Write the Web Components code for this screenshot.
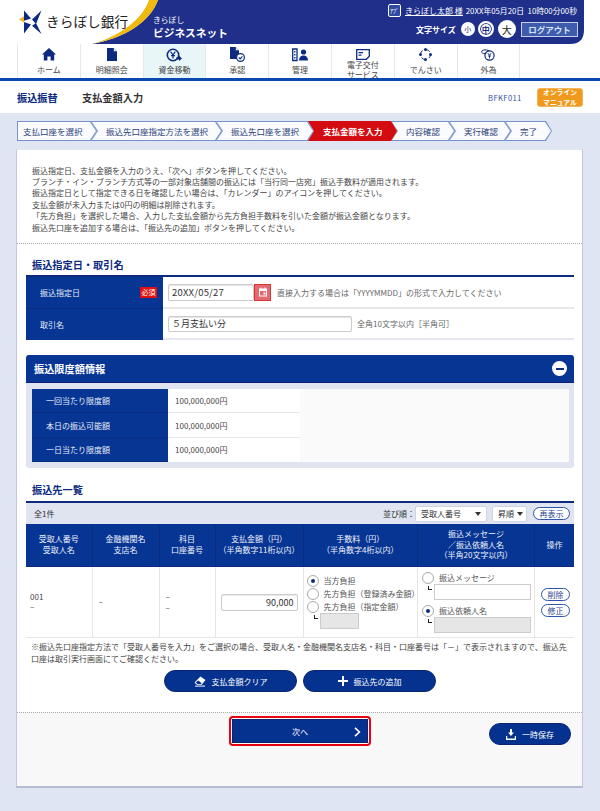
<!DOCTYPE html>
<html lang="ja">
<head>
<meta charset="utf-8">
<title>支払金額入力</title>
<style>
html,body{margin:0;padding:0}
body{background:#dfe5f2;width:600px;height:811px;overflow:hidden;font-family:"Noto Sans CJK JP","Noto Sans",sans-serif;font-size:8px;color:#444}
</style>
</head>
<body>

<kb-header></kb-header>

<kb-nav>
  <kb-nav-item label="ホーム"><svg viewBox="0 0 14 13" width="14" height="13"><path fill="#0b2a80" d="M7 0 14 6.5 12.2 6.5 12.2 12.5 8.6 12.5 8.6 8.4 5.4 8.4 5.4 12.5 1.8 12.5 1.8 6.5 0 6.5Z"/></svg></kb-nav-item>
  <kb-nav-item label="明細照会"><svg viewBox="0 0 10 13" width="10" height="13"><path fill="#0b2a80" d="M0 0H6.5L10 3.5V13H0Z"/><path fill="#fff" d="M6.8 .6 9.4 3.2H6.8Z"/></svg></kb-nav-item>
  <kb-nav-item label="資金移動" active><svg viewBox="0 0 16 14" width="16" height="14"><circle cx="7" cy="7" r="5.7" fill="none" stroke="#0b2a80" stroke-width="1.6"/><path fill="none" stroke="#0b2a80" stroke-width="1.2" d="M4.7 3.6 7 7 9.3 3.6M7 7V10.5M5 7.6H9"/><path fill="#0b2a80" d="M10.5 9H13V7.6L16 10.4 13 13V11.6H10.5Z"/></svg></kb-nav-item>
  <kb-nav-item label="承認"><svg viewBox="0 0 15 15" width="15" height="15"><path fill="#0b2a80" d="M0 0H5.5L9 3.5V12H0Z"/><path fill="#fff" d="M5.8 .6 8.4 3.2H5.8Z"/><circle cx="10.5" cy="10.5" r="3.9" fill="#fff" stroke="#0b2a80" stroke-width="1.2"/><path fill="none" stroke="#0b2a80" stroke-width="1.1" d="M8.8 10.5 10.2 11.9 12.4 9.3"/></svg></kb-nav-item>
  <kb-nav-item label="管理"><svg viewBox="0 0 17 14" width="17" height="14"><path fill="none" stroke="#0b2a80" stroke-width="1.3" d="M.7 1H5V12.5H.7ZM2.8 3V4.5M2.8 6V7.5M2.8 9V10.5"/><circle cx="11.5" cy="4" r="2.6" fill="#0b2a80"/><path fill="#0b2a80" d="M7 12.5C7 9 9 7.4 11.5 7.4S16 9 16 12.5Z"/></svg></kb-nav-item>
  <kb-nav-item label="電子交付<br>サービス"><svg viewBox="0 0 14 11" width="14" height="11"><path fill="#fff" stroke="#0b2a80" stroke-width="1.3" d="M.7.7H13.3V7.3L10.3 10.3H.7Z"/><path fill="#0b2a80" d="M2.5 3H7V4.3H2.5ZM2.5 5.5H5.5V6.8H2.5Z"/></svg></kb-nav-item>
  <kb-nav-item label="でんさい"><svg viewBox="0 0 13 13" width="13" height="13"><circle cx="6.5" cy="6.5" r="5" fill="none" stroke="#0b2a80" stroke-width="1" stroke-dasharray="4 3.9"/><circle cx="6.5" cy="1.5" r="1.5" fill="#0b2a80"/><circle cx="11.5" cy="6.5" r="1.5" fill="#0b2a80"/><circle cx="6.5" cy="11.5" r="1.5" fill="#0b2a80"/><circle cx="1.5" cy="6.5" r="1.5" fill="#0b2a80"/></svg></kb-nav-item>
  <kb-nav-item label="外為"><svg viewBox="0 0 14 12" width="14" height="12"><circle cx="8.5" cy="6.5" r="4.6" fill="none" stroke="#0b2a80" stroke-width="1.2"/><path fill="none" stroke="#0b2a80" stroke-width=".9" d="M6.8 4 8.5 6.5 10.2 4M8.5 6.5V9.4M7 7H10"/><path fill="none" stroke="#0b2a80" stroke-width="1" d="M4.5 4.5C1.8 4.8.4 3.8.6 2.6S3 .6 5.5 1 8.5 2 8.5 2"/></svg></kb-nav-item>
</kb-nav>

<kb-title></kb-title>

<kb-steps>
  <kb-step style="width:80px">支払口座を選択</kb-step>
  <kb-step style="width:131px">振込先口座指定方法を選択</kb-step>
  <kb-step style="width:98px">振込先口座を選択</kb-step>
  <kb-step style="width:89px" active>支払金額を入力</kb-step>
  <kb-step style="width:64px">内容確認</kb-step>
  <kb-step style="width:62px">実行確認</kb-step>
  <kb-step style="width:47px">完了</kb-step>
</kb-steps>

<kb-card>
  <kb-intro></kb-intro>
  <kb-heading style="margin-top:14px;height:17px">振込指定日・取引名</kb-heading>
  <kb-date-table></kb-date-table>
  <kb-limit-panel></kb-limit-panel>
  <kb-heading style="margin-top:15px;height:18px">振込先一覧</kb-heading>
  <kb-toolbar></kb-toolbar>
  <kb-transfer-table></kb-transfer-table>
  <kb-note></kb-note>
  <kb-actions>
    <kb-button>
      <svg slot="icon" viewBox="0 0 12 11" width="12" height="11"><path fill="#fff" d="M6.5.5 11.5 4 7.5 9H3L.5 6.5Z"/><path fill="#06328f" d="M1.8 6.2 3.4 8.2H6.9L7.7 7.2 4.3 4.6Z"/><path fill="#fff" d="M1 9.6H11V10.6H1Z"/></svg>
      支払金額クリア
    </kb-button>
    <kb-button>
      <svg slot="icon" viewBox="0 0 10 10" width="10" height="10"><path fill="#fff" d="M4 0H6V4H10V6H6V10H4V6H0V4H4Z"/></svg>
      振込先の追加
    </kb-button>
  </kb-actions>
  <kb-footer></kb-footer>
</kb-card>

<script>
// 共通: テンプレート文字列から shadow root を作るだけの要素を登録する
function registrar(nombre, html, alConectar) {
  class Comp extends HTMLElement {
    constructor() {
      super();
      this.attachShadow({mode: 'open'});
    }
    connectedCallback() {
      this.shadowRoot.innerHTML = html;
      if (alConectar) alConectar.call(this, this.shadowRoot);
    }
  }
  customElements.define(nombre, Comp);
}

registrar('kb-header', `<style>
  :host{display:flex;position:relative;height:44px;background:#fff;overflow:hidden}
  .fondo{position:absolute;left:0;top:0}
  .logo,.marca,.info{position:relative}
  .logo{flex:none;width:153px;display:flex;align-items:center}
  .logo svg{margin-left:19px;flex:none}
  .logo span{margin-left:2px;font-size:13.7px;color:#222;white-space:nowrap;line-height:1}
  .marca{flex:none;color:#fff;margin-top:13.5px;width:232px}
  .marca small{display:block;font-size:7.8px;line-height:11.5px}
  .marca b{display:block;font-size:10.7px;line-height:15.5px;letter-spacing:0}
  .info{flex:none;width:193px;color:#fff;font-size:7.8px;padding-top:3px;box-sizing:border-box}
  .f1,.f2{display:flex;align-items:center;white-space:nowrap}
  .f1{height:14px;margin-left:3px}
  .id{width:11px;height:11px;border:1px solid #fff;border-radius:2px;font-size:6px;line-height:11px;text-align:center;background:#2f4aa0;margin-right:4px;box-sizing:content-box}
  .f1 u{font-size:8px;margin-right:3px}
  .f2{margin-top:2px;height:20px;margin-left:31px}
  .f2 strong{font-size:8px;margin-right:4px}
  .c{display:flex;align-items:center;justify-content:center;background:#fff;color:#1f2f8a;border-radius:50%;flex:none}
  .s{width:14px;height:14px;font-size:7px;margin-right:3px;margin-left:1px}
  .m{width:12px;height:12px;font-size:8px;font-weight:700;border:2px solid #fff;box-shadow:inset 0 0 0 1px #1f2f8a;margin-right:4px}
  .l{width:18px;height:18px;font-size:10px;margin-right:5px;color:#222}
  .out{width:58px;height:15px;background:#3d5cab;border:1px solid #c6d0ea;box-sizing:border-box;font-size:8.5px;font-weight:700;color:#dbe3f6;text-align:center;line-height:13px}
</style>
<svg class="fondo" width="600" height="44" viewBox="0 0 600 44">
  <path fill="#1f2f8a" d="M158 0H584V30Q584 44 570 44H92C125 38 150 22 158 0Z"/>
  <path fill="#efb90f" d="M149 0H158C150 22 125 38 92 44C120 36 142 20 149 0Z"/>
</svg>
<div class="logo">
  <svg width="25" height="25" viewBox="0 0 25 25">
    <path fill="#f0b414" d="M0 6.5 5 3.2V9.6Z" transform="translate(0 3)"/>
    <path fill="#0b2a80" d="M5 .5 12 8.6 5 10.8ZM22.5 .5 13 9.5 17 14ZM5 12 12 14.5 5 23.5ZM17 13 13 15.8 22.5 24Z"/>
  </svg>
  <span>きらぼし銀行</span>
</div>
<div class="marca"><small>きらぼし</small><b>ビジネスネット</b></div>
<div class="info">
  <div class="f1"><span class="id">ｱﾌﾟ</span><u>きらぼし太郎 様</u><span>20XX年05月20日&nbsp; 10時00分00秒</span></div>
  <div class="f2"><strong>文字サイズ</strong><span class="c s">小</span><span class="c m">中</span><span class="c l">大</span><span class="out">ログアウト</span></div>
</div>`);

registrar('kb-nav', `<style>
  :host{display:flex;height:34px;padding-left:17px;background:#fff;border-bottom:3px solid #0a4ab0;position:relative;z-index:1}
</style><slot></slot>`);

customElements.define('kb-nav-item', class extends HTMLElement {
  constructor() {
    super();
    this.attachShadow({mode: 'open'});
  }
  connectedCallback() {
    var fondo = this.hasAttribute('active') ? '#e8f6f7' : 'transparent';
    this.shadowRoot.innerHTML = `<style>
      :host{display:block;flex:none;width:62.8px;height:34px;box-sizing:border-box;border-left:1px solid #e8e8e8;background:${fondo}}
      :host(:last-child){width:63.8px;border-right:1px solid #e8e8e8}
      .i{height:15px;margin-top:3px;display:flex;align-items:center;justify-content:center}
      .t{height:16px;display:flex;align-items:center;justify-content:center;text-align:center;font-size:8px;line-height:10px;color:#444;white-space:nowrap}
    </style><div class="i"><slot></slot></div><div class="t"><span>${this.getAttribute('label')}</span></div>`;
  }
});

registrar('kb-title', `<style>
  :host{display:flex;align-items:center;height:32px;background:#fff;padding-left:17px;position:relative}
  b{font-size:10.2px;white-space:nowrap}
  .a{color:#0b2a80;width:65px}
  .b{color:#333;width:406px}
  .id{font-size:7.6px;letter-spacing:.4px;color:#2f4f9f;width:49px}
  .man{width:46px;height:19px;background:#ef9a1c;border-radius:3px;color:#fff;font-size:6.8px;font-weight:700;line-height:10px;text-align:center;box-sizing:border-box;white-space:nowrap;border:1px solid #f3b55c;display:flex;align-items:center;justify-content:center}
</style><b class="a">振込振替</b><b class="b">支払金額入力</b><span class="id">BFKF011</span><div class="man"><span>オンライン<br>マニュアル</span></div>`);

registrar('kb-steps', `<style>
  :host{display:flex;height:20px;padding:8px 0 8px 17px}
</style><slot></slot>`);

customElements.define('kb-step', class extends HTMLElement {
  constructor() {
    super();
    this.attachShadow({mode: 'open'});
  }
  connectedCallback() {
    var activo = this.hasAttribute('active');
    this.shadowRoot.innerHTML = `<style>
      :host{display:block;flex:none;position:relative;height:20px;margin-left:-6px;font-size:8.5px;white-space:nowrap;color:${activo ? '#fff' : '#2c3f78'};font-weight:${activo ? 700 : 400};${activo ? 'z-index:2;' : ''}}
      :host(:first-child){margin-left:0}
      .fuera,.dentro{position:absolute;clip-path:polygon(0 0,calc(100% - 6px) 0,100% 50%,calc(100% - 6px) 100%,0 100%,6px 50%)}
      :host(:first-child) .fuera,:host(:first-child) .dentro{clip-path:polygon(0 0,calc(100% - 6px) 0,100% 50%,calc(100% - 6px) 100%,0 100%)}
      .fuera{inset:0;background:${activo ? '#d40b10' : '#7893cc'}}
      .dentro{inset:1px;background:${activo ? '#d40b10' : '#f9fbfe'}}
      .t{position:relative;line-height:20px;padding-left:15px}
      :host(:first-child) .t{padding-left:6px}
    </style><div class="fuera"></div><div class="dentro"></div><div class="t"><slot></slot></div>`;
  }
});

registrar('kb-card', `<style>
  :host{display:block;box-sizing:border-box;margin-left:16px;width:567px;height:639px;background:#fff;border:1px solid #c3c8da;border-top-color:#e3e6ee;border-bottom:2px solid #b6bbcf;overflow:hidden;position:relative;color:#444}
</style><slot></slot>`);

registrar('kb-intro', `<style>
  :host{display:block;height:94px;box-sizing:border-box;padding:14.5px 0 0 15px;border-bottom:1px dotted #aaa;font-size:8px;line-height:11.4px;white-space:nowrap;color:#444}
</style>振込指定日、支払金額を入力のうえ、「次へ」ボタンを押してください。<br>
ブランチ・イン・ブランチ方式等の一部対象店舗間の振込には「当行同一店宛」振込手数料が適用されます。<br>
振込指定日として指定できる日を確認したい場合は、「カレンダー」のアイコンを押してください。<br>
支払金額が未入力または0円の明細は削除されます。<br>
「先方負担」を選択した場合、入力した支払金額から先方負担手数料を引いた金額が振込金額となります。<br>
振込先口座を追加する場合は、「振込先の追加」ボタンを押してください。`);

registrar('kb-heading', `<style>
  :host{display:block;padding-left:15px;font-size:10.2px;font-weight:700;line-height:14px;color:#0b2a80;white-space:nowrap}
</style><slot></slot>`);

registrar('kb-date-table', `<style>
  :host{display:grid;grid-template-columns:137px 1fr;grid-template-rows:32px 31px;margin:0 8px 0 9px;border-top:2px solid #0b2a80;box-sizing:border-box;height:65px}
  .lab{background:#063594;color:#e8edf8;display:flex;align-items:center;justify-content:space-between;padding:0 6px 0 14px;font-size:8px}
  .lab.uno{border-bottom:1px solid #0a2d80}
  .req{background:#e0100f;color:#fff;width:17px;height:11px;font-size:7px;line-height:11px;text-align:center}
  .val{display:flex;align-items:center;padding-left:5px;border-bottom:2px solid #e8e8e8;font-size:8px;color:#666;white-space:nowrap}
  .val.dos{border-bottom-color:#e9e5ef}
  .inp{box-sizing:border-box;border:1px solid #ccc;border-radius:2px;box-shadow:inset 0 1px 1px #e5e5e5;background:#fff;color:#333;font-size:9.5px;height:17px;line-height:15px;padding-left:3px}
  .cal{width:17px;height:17px;background:#e16b70;border:1px solid #d33;box-sizing:border-box;display:flex;align-items:center;justify-content:center;margin-right:6px}
</style>
<div class="lab uno"><span>振込指定日</span><span class="req">必須</span></div>
<div class="val"><div class="inp" style="width:86px;letter-spacing:.2px">20XX/05/27</div><div class="cal"><svg width="10" height="10" viewBox="0 0 10 10"><path fill="#fff" d="M1 1.5H2.5V.5H3.5V1.5H6.5V.5H7.5V1.5H9V9.5H1ZM2 4V8.5H8V4Z"/><path fill="#fff" d="M5.5 5.5H7.5V7.5H5.5Z"/></svg></div>直接入力する場合は「YYYYMMDD」の形式で入力してください</div>
<div class="lab"><span>取引名</span></div>
<div class="val dos"><div class="inp" style="width:184px;font-size:9px;margin-right:5px;height:16px;line-height:14px">５月支払い分</div>全角10文字以内［半角可］</div>`);

registrar('kb-limit-panel', `<style>
  :host{display:block;margin:15px 8px 0 9px;height:113px;background:#dfe4f0;border-radius:3px;overflow:hidden}
  .cab{height:28px;box-sizing:border-box;background:#063594;border-bottom:1px solid #0a1f78;color:#fff;font-size:10.2px;font-weight:700;display:flex;align-items:center;justify-content:space-between;padding:0 7px 0 8px}
  .m{width:15px;height:15px;border-radius:50%;background:#fff;display:flex;align-items:center;justify-content:center}
  .m i{width:8px;height:2px;background:#0b2a80;display:block}
  .cuerpo{margin:6px 5px 0 6px;height:73px;background:#fafafa;display:grid;grid-template-columns:136px 132px;grid-auto-rows:24.4px;align-content:start}
  .l{background:#063594;color:#e8edf8;font-size:8px;display:flex;align-items:center;padding-left:14px;border-bottom:1px solid #0a2d80;box-sizing:border-box}
  .v{background:#fff;font-size:8px;color:#444;display:flex;align-items:center;padding-left:7px;border-bottom:1px solid #e6e6e6;box-sizing:border-box}
  .u{border-bottom-color:#fff}
</style>
<div class="cab"><span>振込限度額情報</span><span class="m"><i></i></span></div>
<div class="cuerpo">
  <div class="l">一回当たり限度額</div><div class="v">100,000,000円</div>
  <div class="l">本日の振込可能額</div><div class="v">100,000,000円</div>
  <div class="l">一日当たり限度額</div><div class="v u">100,000,000円</div>
</div>`);

registrar('kb-toolbar', `<style>
  :host{display:flex;align-items:center;margin:0 8px 0 9px;height:23px;box-sizing:border-box;border-top:2px solid #0b2a80;background:#dfe4f0;font-size:8px;color:#333;padding-left:8px;white-space:nowrap}
  .n{width:349px}
  .sel{height:16px;box-sizing:border-box;background:#fff;border:1px solid #d0d4e0;display:flex;align-items:center;justify-content:space-between;padding:0 5px;border-radius:2px}
  .sel i{width:0;height:0;border:3.5px solid transparent;border-top:4.5px solid #333;border-bottom:0}
  .re{width:37px;height:13px;box-sizing:border-box;border:1px solid #2f55a8;border-radius:7px;background:#fff;color:#1f448f;text-align:center;line-height:11px;margin-left:6px}
</style>
<span class="n">全1件</span><span style="width:32px">並び順：</span>
<div class="sel" style="width:72px"><span>受取人番号</span><i></i></div>
<div class="sel" style="width:35px;margin-left:5px;padding-right:3px"><span>昇順</span><i></i></div>
<div class="re">再表示</div>`);

registrar('kb-radio', `<style>
  :host{display:flex;align-items:center;height:13px;font-size:8px;color:#555;white-space:nowrap}
  i{width:12px;height:12px;box-sizing:border-box;border:1px solid #aaa;border-radius:50%;background:#fff;margin-right:5px;flex:none;display:flex;align-items:center;justify-content:center}
  :host([checked]) i::after{content:"";width:4px;height:4px;border-radius:50%;background:#0b2a80}
</style><i></i><slot></slot>`);

registrar('kb-pill', `<style>
  :host{display:block;width:29px;height:13px;box-sizing:border-box;border:1px solid #2f55a8;border-radius:7px;background:#fff;color:#1f448f;text-align:center;font-size:8px;line-height:11px}
</style><slot></slot>`);

registrar('kb-transfer-table', `<style>
  :host{display:grid;grid-template-columns:66.5px 67px 56px 88px 114.5px 117px 39px;grid-template-rows:43px 71px;margin:0 8px 0 9px;font-size:8px}
  .h{background:#063594;color:#eef1fa;border-right:1px solid #0a2d80;display:flex;align-items:center;justify-content:center;text-align:center;line-height:10.6px;border-bottom:1px solid #0a2d80;box-sizing:border-box;white-space:nowrap}
  .d{border-right:1px solid #e6e6e6;border-bottom:1px solid #e6e6e6;box-sizing:border-box;color:#444;position:relative;white-space:nowrap}
  .txt{display:flex;flex-direction:column;justify-content:center;padding-left:4px;line-height:10px}
  .txt.lado{padding-left:6px}
  .monto{display:flex;align-items:center;justify-content:flex-end;padding-right:5px}
  .monto div{width:77px;height:17px;box-sizing:border-box;border:1px solid #ccc;border-radius:2px;box-shadow:inset 0 1px 1px #e8e8e8;font-size:9px;color:#333;text-align:right;padding-right:3px;line-height:15px}
  .fee{padding:7px 0 0 3px}
  .msg{padding:4px 0 0 4px}
  .bx{display:flex;align-items:flex-start}
  .bx s{display:block;width:3px;height:3px;border-left:1.5px solid #222;border-bottom:1.5px solid #222;margin:2px 2px 0 0;text-decoration:none}
  .caja{box-sizing:border-box;border:1px solid #ccc;background:#fff;height:16px}
  .gris{background:#e6e6e6}
  .op{display:flex;flex-direction:column;align-items:center;justify-content:center;gap:3px;border-right:0;padding-left:2px}
</style>
<div class="h">受取人番号<br>受取人名</div>
<div class="h">金融機関名<br>支店名</div>
<div class="h">科目<br>口座番号</div>
<div class="h">支払金額（円）<br>（半角数字11桁以内）</div>
<div class="h">手数料（円）<br>（半角数字4桁以内）</div>
<div class="h">振込メッセージ<br>／振込依頼人名<br>（半角20文字以内）</div>
<div class="h" style="border-right:0">操作</div>
<div class="d txt"><span>001</span><span>–</span></div>
<div class="d txt lado"><span>–</span></div>
<div class="d txt lado"><span>–</span><span style="margin-top:1px">–</span></div>
<div class="d monto"><div>90,000</div></div>
<div class="d fee">
  <kb-radio checked>当方負担</kb-radio>
  <kb-radio>先方負担（登録済み金額）</kb-radio>
  <kb-radio>先方負担（指定金額）</kb-radio>
  <div class="bx" style="margin-left:7px"><s></s><div class="caja gris" style="width:39px"></div></div>
</div>
<div class="d msg">
  <kb-radio>振込メッセージ</kb-radio>
  <div class="bx" style="margin-left:6px"><s></s><div class="caja" style="width:97px"></div></div>
  <kb-radio checked style="margin-top:4px">振込依頼人名</kb-radio>
  <div class="bx" style="margin-left:6px"><s></s><div class="caja gris" style="width:97px"></div></div>
</div>
<div class="d op"><kb-pill>削除</kb-pill><kb-pill>修正</kb-pill></div>`);

registrar('kb-note', `<style>
  :host{display:block;padding:3px 0 0 14px;font-size:8px;line-height:12px;height:32px;box-sizing:border-box;white-space:nowrap;color:#444}
</style>※振込先口座指定方法で「受取人番号を入力」をご選択の場合、受取人名・金融機関名支店名・科目・口座番号は「－」で表示されますので、振込先<br>口座は取引実行画面にてご確認ください。`);

registrar('kb-button', `<style>
  :host{display:flex;align-items:center;justify-content:center;gap:6px;width:133px;height:22px;box-sizing:border-box;background:#06328f;border:1px solid #0a2570;border-radius:11px;color:#fff;font-size:8px;white-space:nowrap}
</style><slot name="icon"></slot><span><slot></slot></span>`);

registrar('kb-actions', `<style>
  :host{display:flex;justify-content:center;gap:6px;height:42px;padding-left:1px}
</style><slot></slot>`);

registrar('kb-footer', `<style>
  :host{display:grid;grid-template-columns:212px 142px 1fr;align-items:start;height:76px;box-sizing:border-box;background:#f8f8f8;border-top:1px dotted #aaa;padding-top:3px}
  .sig{grid-column:2;height:30px;box-sizing:border-box;border:2px solid #e60012;border-radius:4px;background:#fff;padding:1px}
  .sig div{height:100%;box-sizing:border-box;background:#06328f;border:1px solid #0a2570;color:#fff;font-size:8px;display:flex;align-items:center;justify-content:center;position:relative}
  .sig svg{position:absolute;right:6px;top:7px}
  .gu{justify-self:end;margin:7px 11px 0 0;width:82px;height:22px;box-sizing:border-box;background:#06328f;border:1px solid #0a2570;border-radius:11px;color:#fff;font-size:8px;display:flex;align-items:center;justify-content:center;gap:6px}
</style>
<div class="sig"><div>次へ<svg width="7" height="10" viewBox="0 0 7 10"><path fill="none" stroke="#fff" stroke-width="1.6" d="M1 .8 5.4 5 1 9.2"/></svg></div></div>
<div class="gu"><svg width="10" height="11" viewBox="0 0 10 11"><path fill="#fff" d="M4 0H6V3.5H8L5 7 2 3.5H4ZM0 7H1.2V9.6H8.8V7H10V11H0Z"/></svg>一時保存</div>`);
</script>
</body>
</html>
